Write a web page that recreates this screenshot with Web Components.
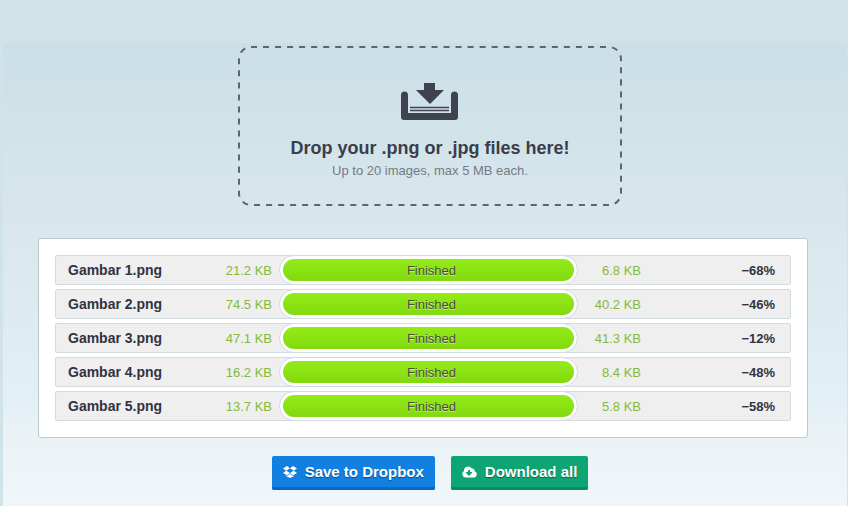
<!DOCTYPE html>
<html lang="en">
<head>
<meta charset="utf-8">
<meta name="viewport" content="width=device-width, initial-scale=1">
<title>Image compressor</title>
<style>
  html {
    min-height: 100%;
    background: #d0e3e9;
  }
  body {
    margin: 0;
    font-family: "Liberation Sans", Arial, sans-serif;
    color: #303440;
  }
</style>
</head>
<body>

<compress-page>
  <drop-zone slot="upload" heading="Drop your .png or .jpg files here!">Up to 20 images, max 5 MB each.</drop-zone>
  <file-list></file-list>
  <action-button slot="actions" icon="dropbox" style="--face: #1180e0; --edge: #0468c4">Save to Dropbox</action-button>
  <action-button slot="actions" icon="cloud" style="--face: #0ea575; --edge: #07905f">Download all</action-button>
</compress-page>

<script>
class Component extends HTMLElement {
  constructor() {
    super()
    this._shadowRoot = this.attachShadow({ mode: 'open' })
  }

  render(html) {
    const template = document.createElement('template')
    template.innerHTML = html
    this._shadowRoot.appendChild(template.content.cloneNode(true))
  }
}

class CompressPage extends Component {
  connectedCallback() {
    this.render(`
      <style>
        :host {
          display: block;
          padding: 43px 1px 0 3px;
        }
        main {
          box-sizing: border-box;
          min-height: calc(100vh - 43px);
          padding: 3px 39px 16px 35px;
          background: linear-gradient(#cbdfe6, #d2e4ea 22%, #dae7ed 42%, #e1eff6 76%, #eaf2f6 84%, #f0f6fa);
        }
        .upload,
        .actions {
          display: flex;
          justify-content: center;
          padding-left: 14px;
        }
        .panel {
          margin: 32px 0 18px;
          padding: 16px;
          background: #fff;
          border: 1px solid #b9cad0;
          border-radius: 3px;
        }
        .actions {
          gap: 16px;
        }
      </style>
      <main>
        <div class="upload"><slot name="upload"></slot></div>
        <div class="panel"><slot></slot></div>
        <div class="actions"><slot name="actions"></slot></div>
      </main>
    `)
  }
}

class DropZone extends Component {
  connectedCallback() {
    this.render(`
      <style>
        :host {
          display: block;
          flex: 0 1 384px;
        }
        label {
          position: relative;
          display: flex;
          flex-direction: column;
          align-items: center;
          padding: 37px 0 25px;
          text-align: center;
          cursor: pointer;
        }
        /* the dashed frame follows the size of the label */
        .frame {
          position: absolute;
          inset: 0;
          width: 100%;
          height: 100%;
          overflow: visible;
        }
        .frame rect {
          x: 1px;
          y: 1px;
          width: calc(100% - 2px);
          height: calc(100% - 2px);
          fill: none;
          stroke: #5d6474;
          stroke-width: 2;
          stroke-dasharray: 6 6;
        }
        input {
          position: absolute;
          width: 1px;
          height: 1px;
          opacity: 0;
        }
        .tray {
          display: block;
          width: 58px;
          height: 38px;
          fill: #40434f;
        }
        strong {
          margin-top: 16px;
          font-size: 18px;
          line-height: 22px;
          color: #3b3e49;
        }
        .hint {
          margin-top: 2px;
          font-size: 13px;
          line-height: 20px;
          color: #737b87;
        }
      </style>
      <label>
        <svg class="frame" aria-hidden="true"><rect rx="12" ry="12" pathLength="1056"/></svg>
        <input type="file" accept=".png,.jpg" multiple>
        <svg class="tray" viewBox="1 0 58 38" aria-hidden="true">
          <path d="M24 0h11v7h9L30 21 16 7h8z"/>
          <path d="M1 12a3 3 0 0 1 7 0v18h43V12a3 3 0 0 1 7 0v22a3 3 0 0 1-3 3H4a3 3 0 0 1-3-3z"/>
          <path d="M10 23.700h39v1.500H10zM10 26.800h39v1.500H10z"/>
        </svg>
        <strong>${this.getAttribute('heading')}</strong>
        <span class="hint"><slot></slot></span>
      </label>
    `)
  }
}

const files = [
  { name: 'Gambar 1.png', before: '21.2 KB', after: '6.8 KB', saved: '−68%' },
  { name: 'Gambar 2.png', before: '74.5 KB', after: '40.2 KB', saved: '−46%' },
  { name: 'Gambar 3.png', before: '47.1 KB', after: '41.3 KB', saved: '−12%' },
  { name: 'Gambar 4.png', before: '16.2 KB', after: '8.4 KB', saved: '−48%' },
  { name: 'Gambar 5.png', before: '13.7 KB', after: '5.8 KB', saved: '−58%' }
]

class FileList extends Component {
  connectedCallback() {
    this.render(`
      <style>
        :host {
          display: block;
        }
        div {
          display: flex;
          flex-direction: column;
          gap: 4px;
        }
      </style>
      <div role="list"></div>
    `)
    const list = this._shadowRoot.querySelector('div')
    files.forEach(file => {
      const row = document.createElement('file-row')
      row.setAttribute('role', 'listitem')
      row.file = file
      list.appendChild(row)
    })
  }
}

class FileRow extends Component {
  connectedCallback() {
    const { name, before, after, saved } = this.file
    this.render(`
      <style>
        :host {
          display: grid;
          grid-template-columns: 144fr 60fr 306fr 63fr 134fr;
          align-items: center;
          padding: 0 15px 0 12px;
          background: #efefef;
          border: 1px solid #d0dce0;
          border-radius: 2px;
          line-height: 28px;
          white-space: nowrap;
        }
        .name {
          font-size: 14px;
          font-weight: bold;
        }
        .size,
        .saved {
          padding-top: 1px;
          font-size: 13px;
          line-height: 27px;
          text-align: right;
        }
        .size {
          color: #85b93c;
        }
        .saved {
          font-weight: bold;
        }
        progress-bar {
          margin: -1px 0 -1px 7px;
        }
      </style>
      <span class="name">${name}</span>
      <span class="size">${before}</span>
      <progress-bar>Finished</progress-bar>
      <span class="size">${after}</span>
      <span class="saved">${saved}</span>
    `)
  }
}

class ProgressBar extends Component {
  connectedCallback() {
    this.render(`
      <style>
        :host {
          display: block;
          padding: 3px;
          background: #fff;
          border: 1px solid #d0dce0;
          border-radius: 15px;
        }
        div {
          padding: 1px 0 0 6px;
          border-radius: 11px;
          background: linear-gradient(#93ec18, #82d90f);
          font-size: 13px;
          line-height: 21px;
          text-align: center;
          color: #4c4a44;
          text-shadow: 0 1px 0 rgba(255, 255, 255, .5);
        }
      </style>
      <div role="progressbar" aria-valuenow="100" aria-valuemin="0" aria-valuemax="100"><slot></slot></div>
    `)
  }
}

const icons = {
  dropbox: `<svg width="14" height="12" viewBox="0 0 14 12">
    <path d="M4 0l3 2.2L3.200 4.700 0 2.400zM10 0l4 2.400-3.200 2.300L7 2.200zM0 6.900l3.200-2.200L7 7.100 4 9.300zM10.800 4.700L14 6.900 10 9.300 7 7.100zM7 7.800l3 2.300 1.200-.7v.6L7 12 2.800 10v-.6l1.200.7z"/>
  </svg>`,
  cloud: `<svg width="15" height="12" viewBox="0 0 15 12">
    <path fill-rule="evenodd" d="M3.500 11.500A3.500 3.500 0 0 1 2 5 4.200 4.200 0 0 1 9.800 2.600 2.300 2.300 0 0 1 12.600 5.300 3.200 3.200 0 0 1 12 11.500zM6 4V6H4v1L7 10 10 7V6H8V4z"/>
  </svg>`
}

class ActionButton extends Component {
  connectedCallback() {
    this.render(`
      <style>
        :host {
          display: block;
        }
        button {
          display: flex;
          align-items: center;
          gap: 8px;
          padding: 0 11px 3px;
          border: 0;
          border-radius: 2px;
          background: var(--face);
          box-shadow: inset 0 -3px 0 var(--edge);
          font: bold 15px/31px "Liberation Sans", Arial, sans-serif;
          color: #fff;
          text-shadow: 0 1px 1px rgba(0, 0, 0, .4);
          white-space: nowrap;
          cursor: pointer;
        }
        svg {
          fill: #fff;
        }
      </style>
      <button type="button">${icons[this.getAttribute('icon')]}<slot></slot></button>
    `)
  }
}

customElements.define('compress-page', CompressPage)
customElements.define('drop-zone', DropZone)
customElements.define('file-list', FileList)
customElements.define('file-row', FileRow)
customElements.define('progress-bar', ProgressBar)
customElements.define('action-button', ActionButton)
</script>
</body>
</html>
